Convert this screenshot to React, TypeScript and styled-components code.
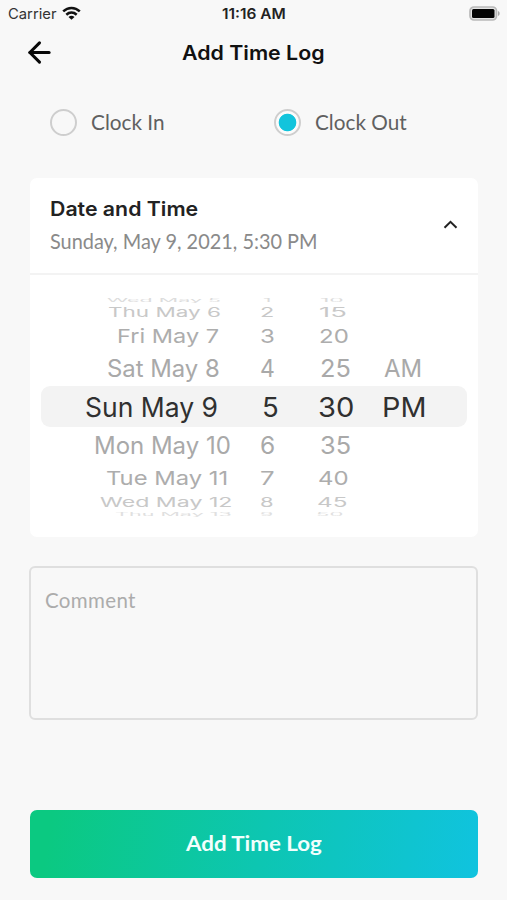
import React, { useLayoutEffect, useRef, useState } from "react";
import styled, { createGlobalStyle } from "styled-components";
import { ArrowLeft } from "lucide-react";

const GlobalStyle = createGlobalStyle`
  * { box-sizing: border-box; }
  body { margin: 0; background: #f8f8f8; }
`;

const ui = `"Inter", "Liberation Sans", sans-serif`;
const copy = `"Lato", "Noto Sans", sans-serif`;

const Screen = styled.main`
  width: 507px;
  height: 900px;
  display: flex;
  flex-direction: column;
  overflow: hidden;
  background: #f8f8f8;
  font-family: ${copy};
  color: #111;
`;

/* Text stretched or condensed to an exact width */
const FitBox = styled.span<{ $width: number }>`
  display: block;
  flex: none;
  width: ${(p) => p.$width}px;
  text-align: left;
  white-space: nowrap;
`;
const FitInner = styled.span`
  display: inline-block;
  transform-origin: 0 50%;
`;

function Fit({ width, scaleY = 1, children }: { width: number; scaleY?: number; children: React.ReactNode }) {
  const ref = useRef<HTMLSpanElement>(null);
  const [scale, setScale] = useState(1);
  useLayoutEffect(() => {
    if (ref.current) setScale(width / ref.current.offsetWidth);
  }, [width, children]);
  return (
    <FitBox $width={width}>
      <FitInner ref={ref} style={{ transform: `scale(${scale}, ${scaleY})` }}>
        {children}
      </FitInner>
    </FitBox>
  );
}

const StatusBar = styled.header`
  height: 27px;
  flex: none;
  display: grid;
  grid-template-columns: 1fr auto 1fr;
  align-items: center;
  padding: 0 7px 0 8px;
  font: 400 14.5px/20px ${ui};
`;
const Carrier = styled.div`
  display: flex;
  align-items: center;
  gap: 5px;
  color: #333;
`;
const Clock = styled.div`
  font-weight: 600;
  color: #222;
`;
const BatterySlot = styled.div`
  display: flex;
  justify-content: flex-end;
`;

const NavBar = styled.nav`
  height: 51px;
  flex: none;
  display: grid;
  grid-template-columns: 1fr auto 1fr;
  align-items: center;
  padding: 0 23px;
`;
const BackButton = styled.button`
  width: 33px;
  height: 33px;
  padding: 0;
  border: 0;
  background: none;
  color: #080808;
  svg { display: block; }
`;
const Title = styled.h1`
  margin: 0;
  font: 600 20px/28px ${ui};
  color: #111;
`;

const Choices = styled.div`
  display: grid;
  grid-template-columns: 224px 1fr;
  margin: 31px 0 0 50px;
  flex: none;
`;
const Choice = styled.label`
  display: flex;
  align-items: center;
  height: 28px;
  gap: 15px;
  padding-bottom: 1px;
  font-size: 20.5px;
  line-height: 27px;
  color: #606060;
`;
const Radio = styled.span<{ $on?: boolean }>`
  width: 27px;
  height: 27px;
  flex: none;
  margin-right: -1px;
  border-radius: 50%;
  border: 2px solid #cecece;
  background: ${(p) => (p.$on ? "radial-gradient(circle, #12c4dc 8.4px, #fbfbfb 9.2px)" : "#f8f8f8")};
`;

const Card = styled.section`
  width: 448px;
  height: 359px;
  flex: none;
  margin: 41px 0 0 30px;
  border-radius: 7px;
  background: #fff;
`;
const CardHeader = styled.div`
  height: 97px;
  display: flex;
  align-items: center;
  justify-content: space-between;
  padding: 0 20px 2px;
  border-bottom: 2px solid #f3f3f3;
`;
const CardTitle = styled.h2`
  margin: 0 0 2px;
  font: 600 20px/30px ${ui};
  color: #222;
`;
const CardDate = styled.div`
  font-size: 20.5px;
  line-height: 30px;
  color: #8a8a8a;
`;

const Wheel = styled.div`
  display: flex;
  flex-direction: column;
  margin: 23px 11px 0;
  height: 217px;
  font-family: ${ui};
`;
const WheelRow = styled.div<{ $height: number; $size: number; $color: string; $selected?: boolean; $shift?: number }>`
  display: flex;
  flex: none;
  align-items: center;
  height: ${(p) => p.$height}px;
  line-height: ${(p) => p.$height}px;
  padding-top: ${(p) => p.$shift ?? 0}px;
  font-size: ${(p) => p.$size}px;
  color: ${(p) => p.$color};
  border-radius: 9px;
  background: ${(p) => (p.$selected ? "#f3f3f3" : "transparent")};
`;
const Gap = styled.span<{ $width: number }>`
  flex: none;
  width: ${(p) => p.$width}px;
`;

type Span = [text: string, from: number, to: number];
type Row = { height: number; size: number; squash: number; color: string; shift?: number; selected?: boolean; cells: Span[] };

const rows: Row[] = [
  { height: 4, size: 23, squash: 0.19, color: "#dcdcdc", cells: [["Wed May 5", 107, 221], ["1", 263, 271], ["10", 320, 344]] },
  { height: 19, size: 23.5, squash: 0.55, color: "#c8c8c8", shift: 2, cells: [["Thu May 6", 108, 221], ["2", 260, 274], ["15", 319, 347]] },
  { height: 29, size: 24, squash: 0.8, color: "#adadad", shift: 2, cells: [["Fri May 7", 117, 219], ["3", 260, 275], ["20", 319, 349]] },
  { height: 36, size: 24.5, squash: 0.98, color: "#a9a9a9", cells: [["Sat May 8", 107, 220], ["4", 260, 275], ["25", 320, 351], ["AM", 384, 422]] },
  { height: 41, size: 27.5, squash: 1, color: "#303030", selected: true, shift: 1, cells: [["Sun May 9", 85, 218], ["5", 262, 279], ["30", 318, 354], ["PM", 382, 426]] },
  { height: 36, size: 24.5, squash: 0.98, color: "#a9a9a9", cells: [["Mon May 10", 94, 231], ["6", 260, 275], ["35", 320, 351]] },
  { height: 29, size: 24, squash: 0.8, color: "#adadad", shift: 2, cells: [["Tue May 11", 106, 228], ["7", 260, 275], ["40", 318, 349]] },
  { height: 19, size: 23.5, squash: 0.55, color: "#c8c8c8", shift: 1, cells: [["Wed May 12", 100, 232], ["8", 260, 274], ["45", 317, 347]] },
  { height: 4, size: 23, squash: 0.19, color: "#e0e0e0", shift: 2, cells: [["Thu May 13", 115, 232], ["9", 260, 273], ["50", 316, 344]] },
];

const WHEEL_LEFT = 41;

const Comment = styled.textarea`
  width: 449px;
  height: 154px;
  flex: none;
  display: block;
  resize: none;
  outline: 0;
  margin: 29px 0 0 29px;
  padding: 18px 14px;
  border: 2px solid #dfdfdf;
  border-radius: 6px;
  background: #f8f8f8;
  font: 400 20.5px/28px ${copy};
  letter-spacing: 0.35px;
  &::placeholder { color: #acacac; opacity: 1; }
`;

const Submit = styled.button`
  width: 448px;
  height: 68px;
  flex: none;
  margin: 90px 0 0 30px;
  padding: 0 0 2px;
  display: flex;
  align-items: center;
  justify-content: center;
  border: 0;
  border-radius: 7px;
  background: linear-gradient(100deg, #0bc981 5%, #0dc6b2 52%, #10c3df 100%);
  color: #f2fffd;
  font: 700 20.5px/28px ${copy};
`;

function WifiIcon() {
  return (
    <svg width="19" height="15" viewBox="0 0 19 15" fill="none" stroke="#111" strokeWidth="2.5">
      <path d="M1.2 5.4C6 .8 13 .8 17.8 5.4" />
      <path d="M4.3 8.700C7.400 5.900 11.600 5.900 14.700 8.700" />
      <path d="M9.500 13.800 6.500 10.900Q9.500 8.700 12.500 10.900Z" fill="#111" stroke="none" />
    </svg>
  );
}

function BatteryIcon() {
  return (
    <svg width="31" height="15" viewBox="0 0 31 15">
      <rect x="1" y="1" width="26.5" height="13" rx="4" fill="#e4e4e4" stroke="#b9b9b9" strokeWidth="1.7" />
      <rect x="3" y="3" width="22.5" height="9" rx="1.500" fill="#050505" />
      <path d="M29 5v5c2.200-.8 2.200-4.200 0-5Z" fill="#aaa" />
    </svg>
  );
}

export default function App() {
  return (
    <>
      <GlobalStyle />
      <Screen>
        <StatusBar>
          <Carrier>
            <Fit width={49}>Carrier</Fit>
            <WifiIcon />
          </Carrier>
          <Clock><Fit width={64}>11:16 AM</Fit></Clock>
          <BatterySlot><BatteryIcon /></BatterySlot>
        </StatusBar>
        <NavBar>
          <BackButton aria-label="Back"><ArrowLeft size={33} strokeWidth={2.2} /></BackButton>
          <Title><Fit width={143}>Add Time Log</Fit></Title>
        </NavBar>
        <Choices>
          <Choice><Radio /><Fit width={74}>Clock In</Fit></Choice>
          <Choice><Radio $on /><Fit width={92}>Clock Out</Fit></Choice>
        </Choices>
        <Card>
          <CardHeader>
            <div>
              <CardTitle><Fit width={148}>Date and Time</Fit></CardTitle>
              <CardDate><Fit width={268}>Sunday, May 9, 2021, 5:30 PM</Fit></CardDate>
            </div>
            <svg width="15" height="11" viewBox="0 0 15 11" fill="none" stroke="#222" strokeWidth="2">
              <path d="M1.500 8.800 7.500 2.800l6 6" />
            </svg>
          </CardHeader>
          <Wheel>
            {rows.map((row) => (
              <WheelRow
                key={row.cells[0][0]}
                $height={row.height}
                $size={row.size}
                $color={row.color}
                $selected={row.selected}
                $shift={row.shift}
              >
                {row.cells.map(([text, from, to], i) => (
                  <React.Fragment key={text}>
                    <Gap $width={from - (i ? row.cells[i - 1][2] : WHEEL_LEFT)} />
                    <Fit width={to - from} scaleY={row.squash}>{text}</Fit>
                  </React.Fragment>
                ))}
              </WheelRow>
            ))}
          </Wheel>
        </Card>
        <Comment placeholder="Comment" />
        <Submit><Fit width={136}>Add Time Log</Fit></Submit>
      </Screen>
    </>
  );
}
